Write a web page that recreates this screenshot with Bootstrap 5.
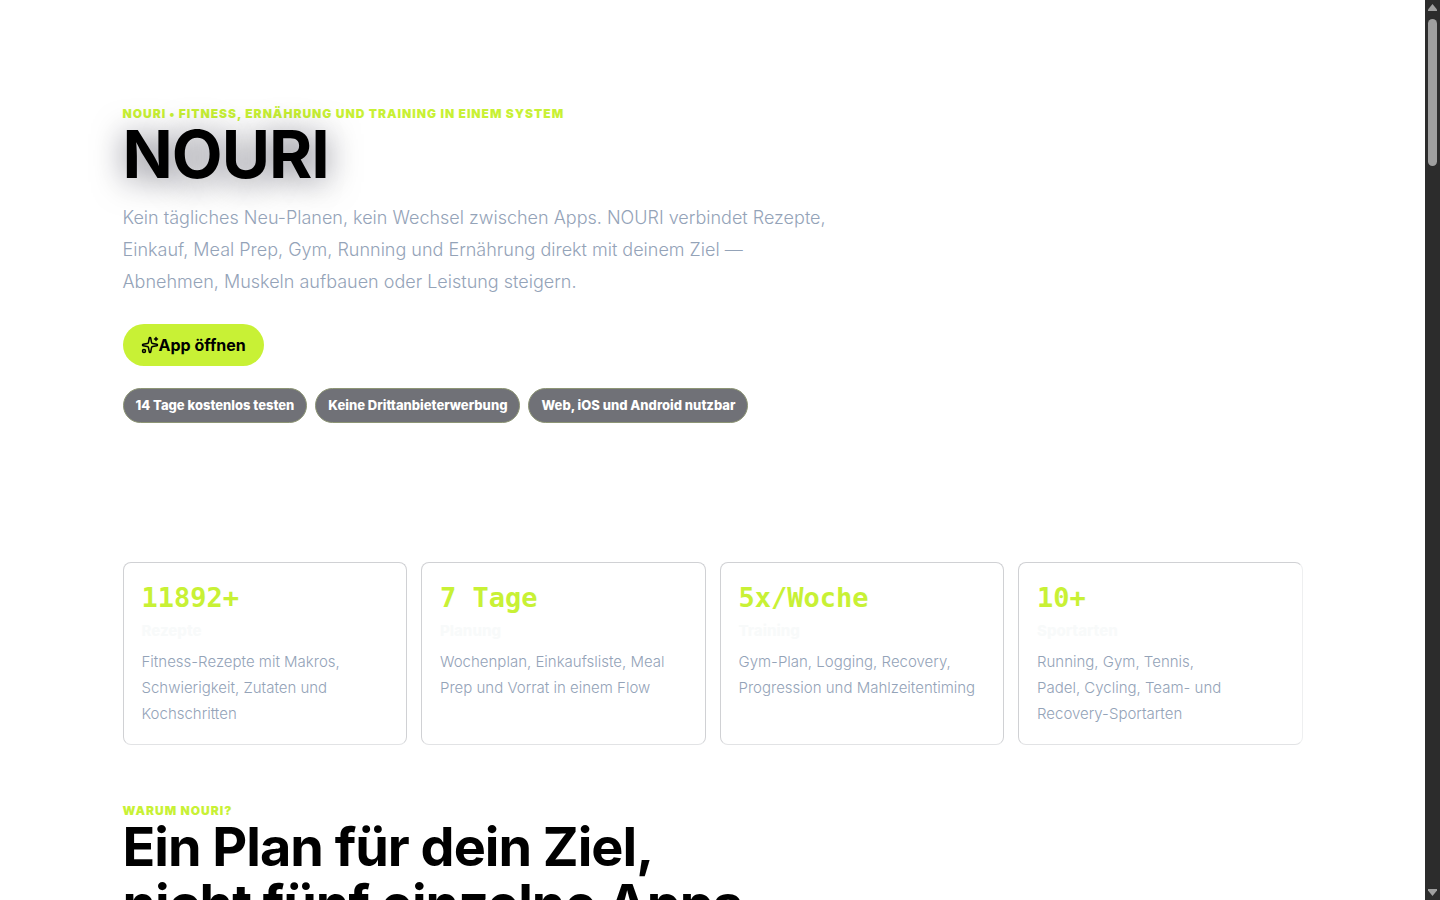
<!DOCTYPE html>
<html lang="de">
<head>
<meta charset="utf-8">
<meta name="viewport" content="width=device-width, initial-scale=1">
<title>NOURI</title>
<link rel="stylesheet" href="https://cdn.jsdelivr.net/npm/bootstrap@5.3.0/dist/css/bootstrap.min.css">
<style>
:root{--lime:#c8f135;--muted:#94a3b8}
body{font-family:Inter,"Liberation Sans",sans-serif;color:#000;background:#fff}
.page{padding-right:15px}
.wrap{max-width:1180px}
.hero{padding-top:104px;padding-bottom:139px}
.eyebrow{font-size:12px;line-height:20px;font-weight:900;letter-spacing:1px;color:var(--lime);text-transform:uppercase}
.hero h1{font-size:66px;line-height:60px;font-weight:700;letter-spacing:-1px;margin-bottom:18px;text-shadow:0 4px 32px rgba(9,9,30,.55)}
.intro{max-width:720px;margin-bottom:26px;font-size:18px;line-height:32px;font-weight:300;color:var(--muted)}
.btn-lime{--bs-btn-bg:var(--lime);--bs-btn-hover-bg:#b9e228;--bs-btn-color:#000;height:42px;padding:0 18px;font-size:16px;font-weight:700;border:0}
.pills{margin-top:22px}
.pill{height:35px;padding:0 12px;font-size:13px;font-weight:800;color:#fff;background:#707177;border:1px solid #8d9575}
.stats{display:grid;grid-template-columns:repeat(4,minmax(0,1fr));gap:14px}
.stat{padding:18px 18px 17px;border:1px solid #d0d1d4;border-bottom-color:#e2e3e5;border-radius:8px}
.stat:last-child{border-right-color:#eeeff0}
.figure-no{font-family:"DejaVu Sans Mono",monospace;font-size:27px;line-height:34px;font-weight:700;color:var(--lime)}
.stat h2{font-size:15px;line-height:26px;font-weight:800;color:#f8fafa;margin:3px 0 5px}
.stat p{font-size:15px;line-height:26px;font-weight:300;color:var(--muted)}
.why{padding-top:56px}
.why h2{font-size:54px;line-height:57px;font-weight:700;letter-spacing:-1px;margin-top:-3px}
.scroller{width:15px;background:#2c2c2c}
.thumb{width:9px;height:147px;border-radius:5px;background:#9f9f9f}
</style>
</head>
<body>
<div class="page vh-100 overflow-hidden">
<main class="wrap mx-auto">
<section class="hero">
<div class="eyebrow">NOURI • Fitness, Ernährung und Training in einem System</div>
<h1>NOURI</h1>
<p class="intro">Kein tägliches Neu-Planen, kein Wechsel zwischen Apps. NOURI verbindet Rezepte,<br>Einkauf, Meal Prep, Gym, Running und Ernährung direkt mit deinem Ziel —<br>Abnehmen, Muskeln aufbauen oder Leistung steigern.</p>
<button type="button" class="btn btn-lime rounded-pill d-flex align-items-center"><svg width="18" height="18" viewBox="0 0 24 24" fill="none" stroke="currentColor" stroke-width="2" stroke-linecap="round" stroke-linejoin="round" aria-hidden="true"><path d="M11.017 2.814a1 1 0 0 1 1.966 0l1.051 5.558a2 2 0 0 0 1.594 1.594l5.558 1.051a1 1 0 0 1 0 1.966l-5.558 1.051a2 2 0 0 0-1.594 1.594l-1.051 5.558a1 1 0 0 1-1.966 0l-1.051-5.558a2 2 0 0 0-1.594-1.594l-5.558-1.051a1 1 0 0 1 0-1.966l5.558-1.051a2 2 0 0 0 1.594-1.594zM20 2v4M22 4h-4"/><circle cx="4" cy="20" r="2"/></svg>App öffnen</button>
<div class="d-flex flex-wrap gap-2 pills">
<span class="pill rounded-pill d-flex align-items-center">14 Tage kostenlos testen</span>
<span class="pill rounded-pill d-flex align-items-center">Keine Drittanbieterwerbung</span>
<span class="pill rounded-pill d-flex align-items-center">Web, iOS und Android nutzbar</span>
</div>
</section>
<section class="stats">
<article class="stat"><div class="figure-no">11892+</div><h2>Rezepte</h2><p class="mb-0">Fitness-Rezepte mit Makros,<br>Schwierigkeit, Zutaten und<br>Kochschritten</p></article>
<article class="stat"><div class="figure-no">7 Tage</div><h2>Planung</h2><p class="mb-0">Wochenplan, Einkaufsliste, Meal<br>Prep und Vorrat in einem Flow</p></article>
<article class="stat"><div class="figure-no">5x/Woche</div><h2>Training</h2><p class="mb-0">Gym-Plan, Logging, Recovery,<br>Progression und Mahlzeitentiming</p></article>
<article class="stat"><div class="figure-no">10+</div><h2>Sportarten</h2><p class="mb-0">Running, Gym, Tennis,<br>Padel, Cycling, Team- und<br>Recovery-Sportarten</p></article>
</section>
<section class="why">
<div class="eyebrow">Warum NOURI?</div>
<h2>Ein Plan für dein Ziel,<br>nicht fünf einzelne Apps.</h2>
</section>
</main>
</div>
<div class="scroller position-fixed top-0 end-0 bottom-0 d-flex flex-column align-items-center justify-content-between py-1" aria-hidden="true">
<div class="d-flex flex-column align-items-center gap-2"><svg width="9" height="7" viewBox="0 0 9 7"><path d="M4.5 0 9 5.5V7H0V5.500z" fill="#9f9f9f"/></svg><div class="thumb"></div></div>
<svg width="9" height="7" viewBox="0 0 9 7"><path d="M0 0h9v1.500L4.500 7 0 1.500z" fill="#9f9f9f"/></svg>
</div>
<script src="https://cdn.jsdelivr.net/npm/bootstrap@5.3.0/dist/js/bootstrap.bundle.min.js"></script>
</body>
</html>
